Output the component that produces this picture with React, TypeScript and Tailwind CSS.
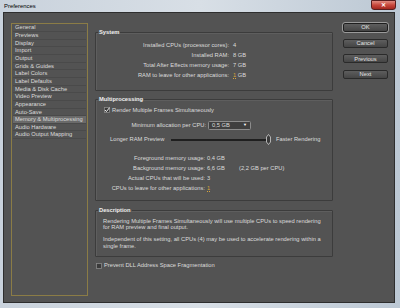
const items = [
  "General",
  "Previews",
  "Display",
  "Import",
  "Output",
  "Grids & Guides",
  "Label Colors",
  "Label Defaults",
  "Media & Disk Cache",
  "Video Preview",
  "Appearance",
  "Auto-Save",
  "Memory & Multiprocessing",
  "Audio Hardware",
  "Audio Output Mapping",
];

const font = { fontFamily: '"Liberation Sans", Arial, sans-serif' };

function Check({ checked }: { checked?: boolean }) {
  return (
    <svg width="6" height="6" viewBox="0 0 6 6" className="shrink-0">
      <rect x="0.5" y="0.5" width="5" height="5" fill="#3a3a3a" stroke="#8a8a8a" strokeWidth="0.8" />
      {checked && <path d="M1 3 L2.4 4.6 L5.6 0.6" fill="none" stroke="#f0f0f0" strokeWidth="1" />}
    </svg>
  );
}

function Hot({ children }: { children: React.ReactNode }) {
  return <span className="text-[#d9a53a] underline decoration-dotted decoration-[0.5px]">{children}</span>;
}

function Group({ title, children, className }: { title: string; children: React.ReactNode; className?: string }) {
  return (
    <fieldset className={`border border-[#3c3c3c] shadow-[inset_1px_1px_0_#5e5e5e] rounded-[1px] px-0 pb-0 ${className ?? ""}`}>
      <legend className="ml-[2px] px-[1px] font-bold text-[#eeeeee] leading-[7px]">{title}</legend>
      {children}
    </fieldset>
  );
}

function Button({ label, def }: { label: string; def?: boolean }) {
  return (
    <div
      className={`h-[9px] w-[45px] flex items-center justify-center rounded-[2px] border text-[#e4e4e4] bg-gradient-to-b from-[#5e5e5e] to-[#454545] ${
        def ? "border-[#1e1e1e] outline outline-[0.8px] outline-[#9a9a9a]" : "border-[#2a2a2a]"
      }`}
    >
      {label}
    </div>
  );
}

export default function App() {
  return (
    <div
      className="w-[400px] h-[308px] overflow-hidden flex flex-col bg-gradient-to-r from-[#c9d2dc] via-[#d8dfe6] to-[#bcc8d4] text-[5.75px] text-[#dcdcdc]"
      style={font}
    >
      {/* title bar */}
      <div className="h-[12px] flex justify-between shrink-0">
        <div className="pl-[4px] pt-[3px] text-black leading-[6px] text-[5.9px]">Preferences</div>
        <div className="mr-[4px] w-[25px] h-[10px] rounded-b-[3px] border border-[#5a1e1e] bg-gradient-to-b from-[#e08a80] via-[#c8473c] to-[#a3271f] flex items-center justify-center text-white font-bold text-[6px] leading-none">
          ✕
        </div>
      </div>

      {/* client */}
      <div className="ml-[3px] mr-[5px] h-[291px] border border-[#2e2e2e] bg-[#535353] flex pt-[10px] pl-[7px]">
        {/* sidebar */}
        <div className="w-[77px] h-[273px] border border-[#8b7c46] shrink-0 pt-[0.3px] px-[1px]">
          {items.map((it) => (
            <div
              key={it}
              className={`h-[7.66px] leading-[7.2px] pl-[2px] border-b border-[#4a4a4a] ${
                it === "Memory & Multiprocessing" ? "bg-[#6a6a6a]" : ""
              }`}
            >
              {it}
            </div>
          ))}
        </div>

        {/* panel */}
        <div className="ml-[7px] w-[238px] flex flex-col pt-[5.5px]">
          <Group title="System" className="pb-[10px]">
            <div className="grid grid-cols-[133px_1fr] gap-x-[4px] pt-[4.5px]">
              {[
                ["Installed CPUs (processor cores):", "4"],
                ["Installed RAM:", "8 GB"],
                ["Total After Effects memory usage:", "7 GB"],
              ].map(([l, v]) => (
                <div key={l} className="contents">
                  <div className="text-right h-[10px] leading-[10px]">{l}</div>
                  <div className="h-[10px] leading-[10px]">{v}</div>
                </div>
              ))}
              <div className="text-right h-[10px] leading-[10px]">RAM to leave for other applications:</div>
              <div className="h-[10px] leading-[10px]">
                <Hot>1</Hot> GB
              </div>
            </div>
          </Group>

          <Group title="Multiprocessing" className="mt-[5px] pb-[7px]">
            <div className="flex items-center gap-[2px] h-[8px] mt-[3px] pl-[8px]">
              <Check checked />
              <span>Render Multiple Frames Simultaneously</span>
            </div>
            <div className="flex items-center h-[9px] mt-[6.5px]">
              <div className="w-[110px] text-right">Minimum allocation per CPU:</div>
              <div className="ml-[2px] w-[43px] h-[9px] rounded-[1.5px] border border-[#8c8c8c] bg-[#3f3f3f] flex items-center justify-between px-[3px]">
                <span>0,5 GB</span>
                <span className="text-[4px] text-white">▼</span>
              </div>
            </div>
            <div className="flex items-center h-[10px] mt-[5px]">
              <div className="pl-[14px] w-[75px]">Longer RAM Preview</div>
              <div className="w-[100px] flex items-center">
                <div className="flex-1 h-[2px] bg-[#1f1f1f]" />
                <svg width="5" height="11" viewBox="0 0 5 11" className="shrink-0">
                  <path d="M2.5 0.5 L4.5 3 L4.5 8 L2.5 10.5 L0.5 8 L0.5 3 Z" fill="#3a3a3a" stroke="#d0d0d0" strokeWidth="0.8" />
                </svg>
              </div>
              <div className="ml-[5px]">Faster Rendering</div>
            </div>
            <div className="grid grid-cols-[109px_1fr] gap-x-[2px] mt-[8px]">
              <div className="text-right h-[10px] leading-[10px]">Foreground memory usage:</div>
              <div className="h-[10px] leading-[10px]">0,4 GB</div>
              <div className="text-right h-[10px] leading-[10px]">Background memory usage:</div>
              <div className="h-[10px] leading-[10px] flex">
                <span className="w-[32px]">6,6 GB</span>
                <span>(2,2 GB per CPU)</span>
              </div>
              <div className="text-right h-[10px] leading-[10px]">Actual CPUs that will be used:</div>
              <div className="h-[10px] leading-[10px]">3</div>
              <div className="text-right h-[10px] leading-[10px]">CPUs to leave for other applications:</div>
              <div className="h-[10px] leading-[10px]">
                <Hot>1</Hot>
              </div>
            </div>
          </Group>

          <Group title="Description" className="mt-[6px] pb-[6px]">
            <div className="pl-[7px] pt-[4px] leading-[6.8px]">
              <p>
                Rendering Multiple Frames Simultaneously will use multiple CPUs to speed rendering
                <br />
                for RAM preview and final output.
              </p>
              <p className="mt-[5.4px]">
                Independent of this setting, all CPUs (4) may be used to accelerate rendering within a
                <br />
                single frame.
              </p>
            </div>
          </Group>

          <div className="flex items-center gap-[2px] h-[8px] mt-[4.7px] pl-[1px]">
            <Check />
            <span>Prevent DLL Address Space Fragmentation</span>
          </div>
        </div>

        {/* buttons */}
        <div className="ml-[10px] flex flex-col gap-[6.7px] pt-[0px]">
          <Button label="OK" def />
          <Button label="Cancel" />
          <Button label="Previous" />
          <Button label="Next" />
        </div>
      </div>
      <div className="flex-1" />
    </div>
  );
}
